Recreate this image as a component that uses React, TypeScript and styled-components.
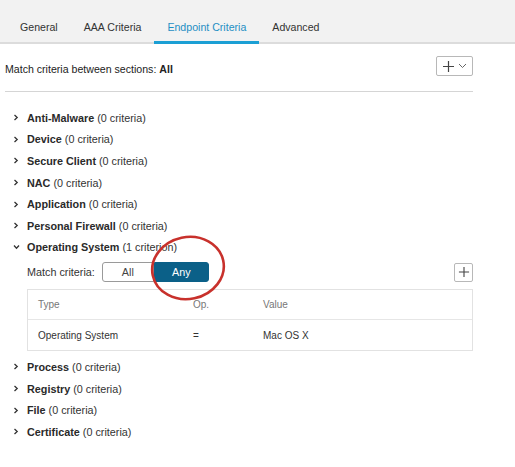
import * as React from "react";
import styled, { createGlobalStyle } from "styled-components";

const GlobalStyle = createGlobalStyle`
    html, body {
        margin: 0;
        padding: 0;
        background: #fff;
    }
    body {
        font-family: "Liberation Sans", Arial, sans-serif;
        color: #222;
    }
`;

const Page = styled.div`
    width: 515px;
    height: 467px;
    overflow: hidden;
    background: #fff;
`;

const TabBar = styled.div`
    display: flex;
    height: 44px;
    padding-left: 7px;
    background: #f2f2f2;
    border-bottom: 2px solid #dcdcdc;
    box-sizing: border-box;
`;

const Tab = styled.div<{ $active?: boolean }>`
    display: flex;
    align-items: flex-end;
    padding: 0 13px 8px;
    font-size: 10.6px;
    color: ${p => (p.$active ? "#1e8fc4" : "#333")};
    border-bottom: 3px solid ${p => (p.$active ? "#1b9fd4" : "transparent")};
    margin-bottom: -2px;
`;

const Body = styled.div`
    padding: 0 42px 0 5px;
`;

const TopRow = styled.div`
    display: flex;
    align-items: center;
    justify-content: space-between;
    height: 48px;
    padding-top: 2px;
    box-sizing: border-box;
    border-bottom: 1px solid #d5d5d5;
    font-size: 10.6px;
`;

const IconButton = styled.button`
    display: flex;
    align-items: center;
    justify-content: center;
    gap: 3px;
    height: 20px;
    padding: 0 5px;
    background: #fff;
    border: 1px solid #b8b8b8;
    border-radius: 2px;
    color: #444;
    margin-bottom: 5px;
`;

const SectionList = styled.div`
    padding-top: 15px;
`;

const SectionRow = styled.div`
    display: flex;
    align-items: center;
    height: 21.6px;
    font-size: 10.8px;
    color: #333;
`;

const Chevron = styled.span`
    display: flex;
    justify-content: center;
    width: 22px;
    color: #444;
`;

const SectionName = styled.b`
    font-weight: bold;
    color: #2a2a2a;
    margin-right: 3px;
`;

const Expanded = styled.div`
    padding-left: 22px;
`;

const MatchRow = styled.div`
    position: relative;
    display: flex;
    align-items: center;
    height: 20px;
    margin-top: 4px;
    font-size: 10.8px;
    color: #333;
`;

const MatchLabel = styled.span`
    margin-right: 7px;
`;

const Toggle = styled.div`
    display: flex;
    height: 20px;
`;

const ToggleButton = styled.div<{ $on?: boolean; $w: number }>`
    display: flex;
    align-items: center;
    justify-content: center;
    width: ${p => p.$w}px;
    box-sizing: border-box;
    font-size: 10.8px;
    color: ${p => (p.$on ? "#fff" : "#444")};
    background: ${p => (p.$on ? "#0b6088" : "#fff")};
    border: 1px solid ${p => (p.$on ? "#0b6088" : "#9a9a9a")};
    border-radius: ${p => (p.$on ? "0 3px 3px 0" : "3px 0 0 3px")};
`;

const PlusButton = styled(IconButton)`
    margin: 0 0 0 auto;
    width: 19px;
    height: 19px;
    padding: 0;
`;

const Ring = styled.svg`
    position: absolute;
    left: 123px;
    top: -27px;
    overflow: visible;
    pointer-events: none;
`;

const Table = styled.div`
    margin-top: 7px;
    border: 1px solid #e2e2e2;
    font-size: 10px;
`;

const TRow = styled.div<{ $head?: boolean }>`
    display: grid;
    grid-template-columns: 155px 70px 1fr;
    align-items: center;
    height: ${p => (p.$head ? 29 : 30)}px;
    padding-left: 10px;
    color: ${p => (p.$head ? "#777" : "#333")};
    border-top: ${p => (p.$head ? "none" : "1px solid #e6e6e6")};
`;

const After = styled.div`
    padding-top: 5px;
`;

const ChevronRight = () => (
    <svg width="6" height="7" viewBox="0 0 6 7">
        <path d="M1.5 1 L4.2 3.5 L1.5 6" fill="none" stroke="#333" strokeWidth="1.3" />
    </svg>
);

const ChevronDown = () => (
    <svg width="7" height="6" viewBox="0 0 7 6">
        <path d="M1 1.5 L3.5 4.2 L6 1.5" fill="none" stroke="#333" strokeWidth="1.3" />
    </svg>
);

const Plus = ({ size = 13 }: { size?: number }) => (
    <svg width={size} height={size} viewBox="0 0 13 13">
        <path d="M6.5 1 V12 M1 6.5 H12" stroke="#444" strokeWidth="1.2" />
    </svg>
);

const CaretDown = () => (
    <svg width="9" height="6" viewBox="0 0 9 6">
        <path d="M1 1 L4.5 4.5 L8 1" fill="none" stroke="#666" strokeWidth="1" />
    </svg>
);

const before = ["Anti-Malware", "Device", "Secure Client", "NAC", "Application", "Personal Firewall"];
const after = ["Process", "Registry", "File", "Certificate"];
const tabs = ["General", "AAA Criteria", "Endpoint Criteria", "Advanced"];

const Section = ({ name }: { name: string }) => (
    <SectionRow>
        <Chevron><ChevronRight /></Chevron>
        <SectionName>{name}</SectionName>(0 criteria)
    </SectionRow>
);

export default function App() {
    return (
        <Page>
            <GlobalStyle />
            <TabBar>
                {tabs.map(t => (
                    <Tab key={t} $active={t === "Endpoint Criteria"}>{t}</Tab>
                ))}
            </TabBar>
            <Body>
                <TopRow>
                    <span>Match criteria between sections: <b>All</b></span>
                    <IconButton><Plus /><CaretDown /></IconButton>
                </TopRow>
                <SectionList>
                    {before.map(n => <Section key={n} name={n} />)}
                    <SectionRow>
                        <Chevron><ChevronDown /></Chevron>
                        <SectionName>Operating System</SectionName>(1 criterion)
                    </SectionRow>
                    <Expanded>
                        <MatchRow>
                            <MatchLabel>Match criteria:</MatchLabel>
                            <Toggle>
                                <ToggleButton $w={52}>All</ToggleButton>
                                <ToggleButton $w={55} $on>Any</ToggleButton>
                            </Toggle>
                            <PlusButton><Plus size={12} /></PlusButton>
                            <Ring width="76" height="64">
                                <ellipse cx="38" cy="33" rx="36" ry="31" fill="none" stroke="#c8312c" strokeWidth="2.6" transform="rotate(-12 38 33)" />
                            </Ring>
                        </MatchRow>
                        <Table>
                            <TRow $head><span>Type</span><span>Op.</span><span>Value</span></TRow>
                            <TRow><span>Operating System</span><span>=</span><span>Mac OS X</span></TRow>
                        </Table>
                    </Expanded>
                    <After>
                        {after.map(n => <Section key={n} name={n} />)}
                    </After>
                </SectionList>
            </Body>
        </Page>
    );
}
